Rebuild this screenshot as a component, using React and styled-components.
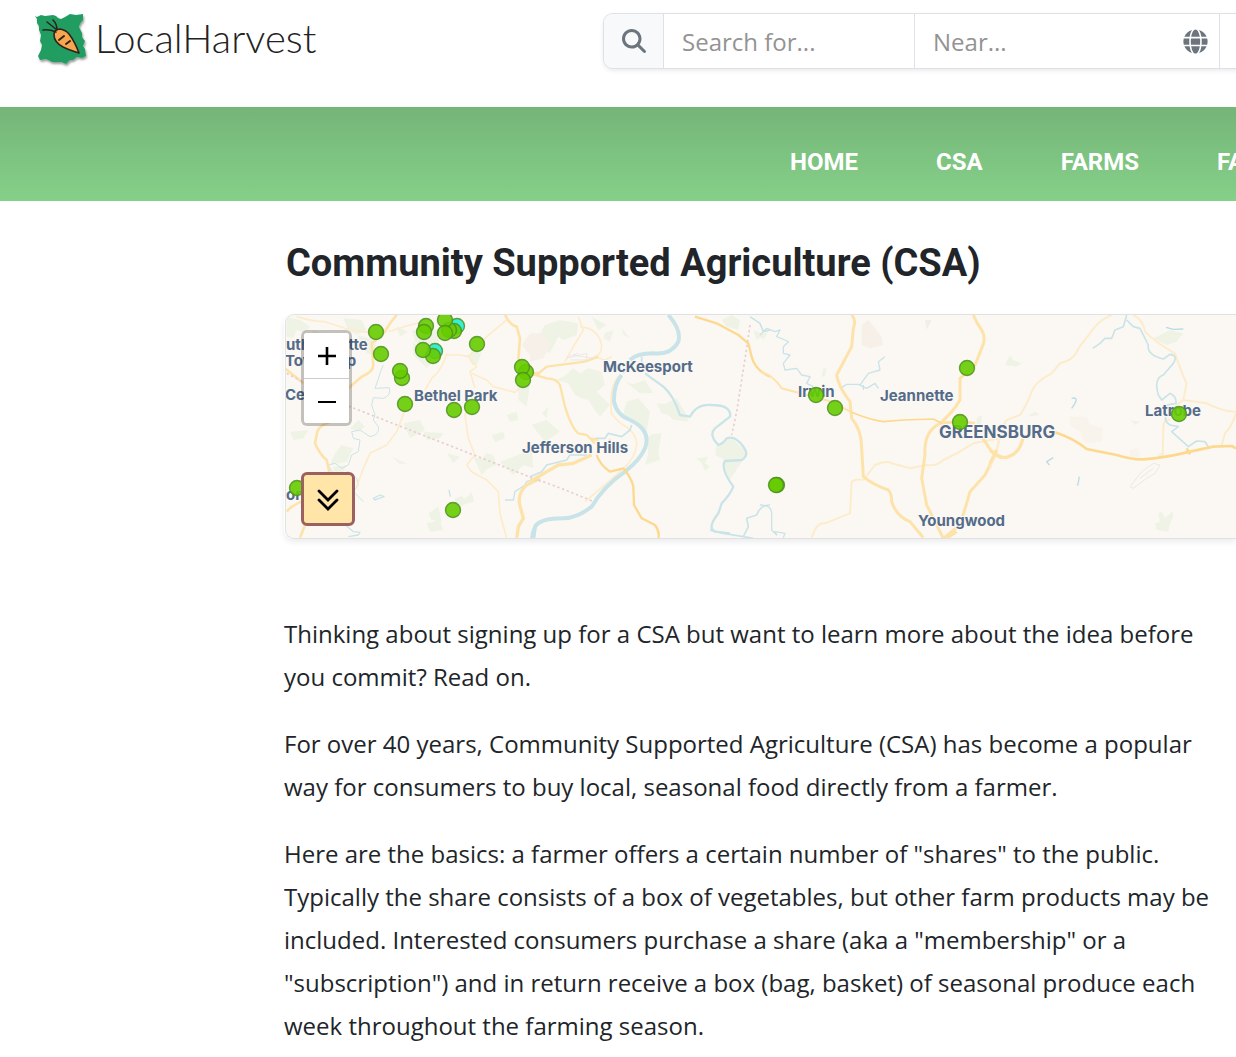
import React, { useState } from "react";
import styled, { createGlobalStyle } from "styled-components";
import { FaGlobe } from "react-icons/fa";
import { FaMagnifyingGlass } from "react-icons/fa6";

const GlobalStyle = createGlobalStyle`
  * {
    box-sizing: border-box;
  }
  body {
    margin: 0;
    overflow-x: hidden;
    background: #fff;
    color: #212529;
    font-family: "Open Sans", "Liberation Sans", sans-serif;
  }
`;

const StyledHeader = styled.header`
  display: flex;
  justify-content: space-between;
  height: 107px;
  padding: 13px 0 0 34px;
  overflow: hidden;
`;
const StyledLogo = styled.a`
  display: flex;
  gap: 4px;
  height: 56px;
  color: #222;
  text-decoration: none;
  font-family: Lato, "Open Sans", sans-serif;
  font-size: 40px;
  font-weight: 300;
  line-height: 50px;
`;
const StyledSearch = styled.form`
  display: flex;
  height: 56px;
  margin-right: -17px;
  border: 1px solid #dee2e6;
  border-radius: 10px;
  background: #fff;
  box-shadow: 0 2px 4px rgba(0, 0, 0, 0.08);
`;
const StyledSearchIcon = styled.button`
  display: flex;
  align-items: center;
  justify-content: center;
  width: 60px;
  padding: 0;
  border: 0;
  border-right: 1px solid #dee2e6;
  border-radius: 9px 0 0 9px;
  background: #f8f9fa;
  color: #6c757d;
  font-size: 24px;
`;
const StyledField = styled.label`
  display: flex;
  align-items: center;
  width: ${(props) => props.$width};
  padding: 0 11px 0 18px;
  border-right: 1px solid #dee2e6;
  color: #6c757d;
  font-size: 25px;
`;
const StyledInput = styled.input`
  flex: 1;
  min-width: 0;
  height: 100%;
  padding: 0;
  border: 0;
  background: transparent;
  font-family: inherit;
  font-size: 24px;
  &::placeholder {
    color: #939393;
    opacity: 1;
  }
  &:focus {
    outline: none;
  }
`;

const StyledNav = styled.nav`
  display: flex;
  gap: 78px;
  height: 94px;
  padding: 16px 0 0 790px;
  overflow: hidden;
  background: linear-gradient(to bottom, #75b578, #85d089);
  font-family: Roboto, "Open Sans", sans-serif;
  font-size: 24px;
  font-weight: 700;
  line-height: 78px;
  white-space: nowrap;
`;
const StyledNavLink = styled.a`
  color: #fff;
  text-decoration: none;
  &:hover {
    text-decoration: underline;
  }
`;

const StyledMain = styled.main`
  padding-left: 284px;
`;
const StyledTitle = styled.h1`
  margin: 0;
  padding: 37px 0 26px 2px;
  font-family: Roboto, "Open Sans", sans-serif;
  font-size: 38px;
  font-weight: 700;
  line-height: 50px;
`;
const StyledMap = styled.section`
  position: relative;
  height: 225px;
  margin-left: 1px;
  border: 1px solid #dee2e6;
  border-right: 0;
  border-radius: 9px 0 0 9px;
  overflow: hidden;
  background: #fbf8f3;
`;
const StyledMapShadow = styled.div`
  border-radius: 9px 0 0 9px;
  box-shadow: 0 3px 6px rgba(0, 0, 0, 0.08);
`;
const StyledMapDrawing = styled.svg`
  display: block;
  width: 100%;
  height: 100%;
`;
const StyledZoom = styled.div`
  position: absolute;
  top: 15px;
  left: 15px;
  display: flex;
  flex-direction: column;
  width: 51px;
  border: 3px solid rgba(0, 0, 0, 0.22);
  border-radius: 6px;
  background: #fff;
  background-clip: padding-box;
`;
const StyledZoomButton = styled.button`
  display: flex;
  align-items: center;
  justify-content: center;
  height: 45px;
  padding: 0 0 0 1px;
  border: 0;
  border-radius: 3px;
  background: #fff;
  & + & {
    border-top: 1px solid #ccc;
    border-radius: 0 0 3px 3px;
  }
`;
const StyledExpand = styled.button`
  position: absolute;
  top: 157px;
  left: 15px;
  display: flex;
  align-items: center;
  justify-content: center;
  width: 54px;
  height: 54px;
  padding: 0;
  border: 3px solid #9b615f;
  border-radius: 6px;
  background: #ffe6a8;
`;

const StyledArticle = styled.article`
  padding: 73px 18px 8px 0;
  font-size: 24px;
  line-height: 43px;
`;
const StyledParagraph = styled.p`
  margin: 0 0 24px;
`;

const NAV = ["HOME", "CSA", "FARMS", "FARMERS MARKETS"];

const PARAGRAPHS = [
  "Thinking about signing up for a CSA but want to learn more about the idea before you commit? Read on.",
  "For over 40 years, Community Supported Agriculture (CSA) has become a popular way for consumers to buy local, seasonal food directly from a farmer.",
  'Here are the basics: a farmer offers a certain number of "shares" to the public. Typically the share consists of a box of vegetables, but other farm products may be included. Interested consumers purchase a share (aka a "membership" or a "subscription") and in return receive a box (bag, basket) of seasonal produce each week throughout the farming season.',
];

const COLORS = {
  water: "#c9e4e8",
  road: "#fde3a9",
  minor: "#fdeccb",
  main: "#fcd98f",
  wood: "#eff3e5",
  border: "#e8cdd1",
};

// Each sheet is drawn at three times the map scale, from its own left edge.
const SHEETS = [
  {
    x: 280,
    shapes: [
      ["wood", "M20 35 60 45 90 65 75 85 50 75 40 100 20 95ZM95 75 130 85 145 100 110 105ZM190 40 245 45 260 75 230 90 205 75ZM230 90 290 105 280 150 260 145ZM350 65 385 80 360 95ZM395 75 470 75 480 130 440 135 405 110ZM400 110 460 170 440 190 400 150Z"],
      ["wood", "M235 345 255 365 235 380 210 370ZM370 355 420 345 435 375 390 400ZM430 380 490 385 480 400 440 405ZM30 380 85 375 70 400 40 405ZM185 420 220 430 200 470 150 480 165 445ZM160 485 200 480 190 500 160 500ZM335 455 380 475 360 478ZM500 445 540 455 520 475ZM525 580 545 572 555 582 575 560 582 590 560 596 530 610ZM445 625 475 605 485 650 455 645ZM440 655 480 645 490 675 450 680ZM715 225 750 240 740 305 715 285ZM580 455 605 462 620 445 640 450 650 480 625 490 605 510ZM635 390 670 380 675 400 645 412ZM660 470 715 450 755 430 760 490 730 480 700 510Z"],
      ["wood", "M575 135 605 145 590 180 565 165ZM680 330 710 320 715 345 690 350Z"],
      ["wood", "M745 90 780 85 780 165 750 150 725 120Z", "#f6f0e8"],
      ["water", "M310 180Q300 200 294 225L285 250 328 248Q335 270 310 280L280 278 275 300 285 330 280 345 295 365Q300 390 270 395L240 375 215 380 220 400 240 405 235 440 215 450 205 480 185 490 165 475 145 480 165 515 205 500 230 520 235 540 220 560 250 590", 3],
      ["water", "M280 580 300 570 312 575 285 585ZM507 555 511 575M190 655 220 680 240 682 235 690 205 695M675 585 700 585 705 560 735 540 740 530 780 515", 4],
      ["water", "M780 650Q758 665 755 700", 10],
      ["minor", "M50 35Q100 50 135 50L195 70 280 85M325 80 390 60 455 45M500 145Q490 190 455 220L435 255M500 150 540 150 565 155 590 130 620 95 680 45M575 165 590 185 570 200 585 250M575 205 620 225 640 245 705 262 735 230M375 315 350 380 320 420 270 445 250 490 230 545M580 290 555 330 565 400 585 450 560 480 575 500 620 525 655 560 660 625 680 700M565 150 580 180", 5],
      ["road", "M350 30Q325 60 315 80L275 115 280 180Q280 200 245 215L205 250M175 345Q120 355 112 380L105 415Q120 450 140 465L150 510M15 190 70 235M20 620Q45 590 90 585M60 698 75 660M675 30Q690 60 710 65L720 100 715 160 740 205 780 205", 8],
      ["road", "M780 520 740 540Q715 560 718 595L730 640 715 665 710 700", 10],
      ["border", "M20 205 210 305 735 510 780 530", 5],
    ],
  },
  {
    x: 530,
    shapes: [
      ["wood", "M45 60 90 45 145 55 140 90 100 105 85 95 60 145 10 120ZM185 35 230 60 205 75ZM225 85 250 75 240 110 220 100ZM275 70 300 100 280 90ZM75 225 100 215 130 190 150 205 175 190 215 200 225 240 200 260 215 275 240 300 210 335 190 310 175 285 160 282 135 270 115 235ZM285 230 310 238 345 225 370 265 330 265ZM290 290 325 280 360 320 350 380 320 350 300 345 280 325ZM380 295 405 297 440 280 470 330 475 350 430 345 415 330 395 325ZM35 325 55 305 50 340ZM5 360 50 345 90 380 45 410ZM350 400 365 388 395 385 385 440 390 465 345 480 355 445ZM500 460 535 455 525 475 540 485 525 498 515 475ZM560 420 600 395 650 440 635 470 600 525 585 500 585 465 555 450ZM575 45 605 30 630 45 625 75 590 65ZM670 75 705 90 680 105Z"],
      ["wood", "M0 85 40 85 60 120 40 160 0 170Z", "#f6f0e8"],
      ["border", "M25 525Q110 555 190 590M660 60 650 130 620 320 605 390", 5],
      ["minor", "M240 400 230 420M105 170 130 125 160 75 145 35M150 65Q205 70 215 120 215 150 195 155L225 165 245 155M245 330Q235 240 270 210M245 325Q260 350 295 370 320 390 320 420 315 460 280 490 220 545 165 590 100 630L40 640M350 200 405 230 450 285 485 350 480 370 450 440 445 510 415 510 395 545 415 575 380 620 370 650 375 680M440 285 470 298 505 290 530 250 590 190 620 105 645 85 645 30M475 30 475 100 490 115 465 130 435 160 310 168 295 175M380 30Q430 70 430 110L425 150M530 40 515 90 490 110", 5],
      ["water", "M305 360 300 375 275 395 235 385 225 400 195 400M170 450 120 450 110 465 50 480 35 500 0 515M300 170 280 205M335 155 335 175M660 35 690 55 700 80 720 75M720 600Q690 600 680 630L650 640 655 665 640 695M540 675 580 685 640 695 670 700", 5],
      ["water", "M345 205 400 245Q430 270 450 330L480 335Q500 295 545 300 605 300 600 335L555 370Q535 390 565 420 580 415 590 400 615 390 640 425 660 450 635 465L585 468Q570 490 610 545 600 570 575 595L565 625Q530 670 555 680L600 685", 7],
      ["water", "M415 30Q455 75 445 110 425 150 370 145 320 145 300 165M275 210Q250 240 252 290 260 330 300 345 365 375 345 430 330 465 285 500 220 545 185 605 140 640 100 640 30 640 15 665L10 700", 12],
      ["road", "M20 210 50 185 165 170 205 155M0 205 50 220Q80 220 90 240L105 305Q125 370 145 385L170 390 195 415M180 400 205 405", 7],
      ["road", "M0 530Q50 500 85 480L130 475 185 450", 10],
      ["main", "M200 450Q210 480 240 500L280 490Q305 520 310 545L312 600 335 640 375 660Q390 680 385 700M495 35 560 55 625 90 655 115 665 155Q675 195 720 215", 7],
      ["border", "M110 160 170 145 170 165 120 165M130 150 190 160M115 155 145 145", 2, "#e3e1e1"],
    ],
  },
  {
    x: 760,
    shapes: [
      ["wood", "M185 215 190 190 200 190 195 215ZM650 340 665 330 665 355 650 360ZM0 90 25 80 10 105Z"],
      ["wood", "M305 60 325 45 365 95 370 120 330 130 305 120Z", "#f6f0e8"],
      ["wood", "M495 45 515 45 500 75Z", "#efeeec"],
      ["water", "M0 90 20 70 45 80 60 75 50 95 75 105 85 110 70 125 70 145 90 150 70 175 75 195 110 190 125 210 150 215 140 235 160 245M240 250 260 238 295 238 320 250 345 235 355 250M300 240 325 205 360 195 355 170 375 155M310 240 310 255M0 600Q35 600 35 625L35 675 50 690 45 680 75 685 70 698", 4],
      ["minor", "M155 698Q170 650 195 655L270 625 275 530Q290 520 310 525M310 525 345 480Q380 465 395 475L450 490 500 480Q530 485 550 465L590 445 640 415 720 400M720 395 705 450", 6],
      ["road", "M0 200Q40 210 65 250L140 270 215 290 275 322", 6],
      ["road", "M640 30Q650 55 665 75 680 100 665 130L645 180 600 220 600 285Q580 320 540 355 490 380 495 450L485 520 500 600 525 650 550 700", 9],
      ["road", "M275 30Q290 45 280 70L275 125 230 210Q235 245 270 290L275 340Q305 375 305 430L310 515Q340 540 385 555 395 565 395 590 410 635 450 650L490 698M550 700 600 660 620 595 630 560 675 510 705 450M560 700 590 680", 9],
      ["road", "M665 395 695 440 725 460M540 355 600 350 645 355", 9],
      ["main", "M275 322Q330 345 370 350L430 345 520 342 545 355", 5],
    ],
  },
  {
    x: 990,
    shapes: [
      ["wood", "M490 100 540 75 580 85 560 110 530 120ZM45 180 60 150 70 165 95 175 80 185ZM110 335 135 320 150 330ZM420 345 450 350 435 360ZM495 655 510 650 505 625 515 620 525 638 550 618 548 640 540 655 535 680 500 675ZM500 450 520 440 515 455Z"],
      ["wood", "M240 335 290 335 300 360 340 370 335 410 285 415 270 380 240 360ZM420 435 445 430 450 455 420 455Z", "#f8f3eb"],
      ["minor", "M0 490Q20 440 30 400L35 370 50 345 90 330Q110 300 125 260 135 230 185 205L210 175Q255 165 265 130L300 85Q325 45 365 30", 6],
      ["minor", "M430 30Q460 45 465 80 500 115 555 145 575 205 590 235L580 285M540 345Q520 340 520 370L518 455M560 300 580 285 650 295Q700 320 738 320M738 325Q725 365 705 385L695 420", 6],
      ["water", "M410 30 400 65 375 75 365 100 345 100 330 115 308 130M410 45 430 65 450 70 475 120Q470 150 520 162L540 148Q565 150 550 175L520 210Q490 220 505 270L515 285 540 265Q560 275 558 295L530 300 545 320Q510 340 540 360L565 365 545 380 595 425 620 408 645 410 655 425", 5],
      ["water", "M528 67 550 73 580 72M245 280Q265 275 255 295L245 310M190 458 170 470 178 480M268 515 263 542", 4, "#b8dce4"],
      ["border", "M420 545 455 500 490 475 510 480 495 505 470 520 430 550ZM450 520 490 490", 3, "#eae7e6"],
      ["road", "M0 435Q35 465 55 455 90 445 100 395M0 475 20 435", 10],
      ["main", "M195 382Q250 400 290 432L380 450Q430 465 460 463 520 460 600 440L670 425 725 423 738 430M590 430 600 448", 8],
    ],
  },
];

const LABELS = [
  { x: 286, y: 350, text: "uth Fayette" },
  { x: 285, y: 366, text: "Township" },
  { x: 285, y: 400, text: "Cecil" },
  { x: 286, y: 500, text: "ons" },
  { x: 414, y: 401, text: "Bethel Park" },
  { x: 603, y: 372, text: "McKeesport" },
  { x: 522, y: 453, text: "Jefferson Hills" },
  { x: 798, y: 397, text: "Irwin" },
  { x: 880, y: 401, text: "Jeannette" },
  { x: 939, y: 438, text: "GREENSBURG", size: 17 },
  { x: 1145, y: 416, text: "Latrobe" },
  { x: 918, y: 526, text: "Youngwood" },
];

const PINS = [
  [376, 332], [381, 354], [402, 378], [400, 371], [405, 404],
  [426, 326], [424, 332], [457, 326, "#1ef0d0"], [454, 331], [449, 330], [445, 320], [445, 333],
  [435, 351, "#1ef0d0"], [433, 356], [423, 350], [477, 344],
  [526, 372], [522, 367], [523, 380], [454, 410], [472, 407],
  [297, 488], [453, 510], [777, 485], [776, 485], [816, 395], [835, 408],
  [967, 368], [960, 422], [1179, 414],
];

const Carrot = () => (
  <svg width="57" height="56" viewBox="0 0 57 56" aria-hidden="true">
    <defs>
      <filter id="paper-shadow" x="-10%" y="-10%" width="125%" height="125%">
        <feDropShadow dx="1" dy="2" stdDeviation="1" floodColor="#000" floodOpacity="0.4" />
      </filter>
    </defs>
    <path
      d="M1 3 3 4 7 2 11 3 19 2 22 3 24 5 27 6 31 4 36 1 42 2 49 1 49 7 46 11 45 14 48 20 48 24 51 28 49 33 51 36 52 43 48 45 43 44 39 47 36 47 34 49 32 51 27 49 22 49 18 49 12 46 6 47 4 43 7 37 8 32 6 28 7 22 5 17 5 13 3 10 3 6Z"
      fill="#249d62"
      filter="url(#paper-shadow)"
    />
    <path
      d="M20 22Q20 16 26 16 32 17 35 21 41 29 45 40 35 37 29 34 20 29 20 22Z"
      fill="#f8a550"
      stroke="#29251c"
      strokeWidth="1.6"
      strokeLinejoin="round"
    />
    <path
      d="M22 19Q15 16 9 17M23 17Q18 13 13 9M23 17Q23 11 19 7"
      fill="none"
      stroke="#29251c"
      strokeWidth="1.6"
      strokeLinecap="round"
    />
    <path
      d="M25 27 30 23M32 31 36 28"
      stroke="#29251c"
      strokeWidth="2"
      strokeLinecap="round"
    />
  </svg>
);

const MapDrawing = () => (
  <StyledMapDrawing
    viewBox="286 315 950 223"
    preserveAspectRatio="xMinYMin slice"
    role="img"
    aria-label="Map of CSA farms">
    {SHEETS.map((sheet) => (
      <g
        key={sheet.x}
        transform={`translate(${sheet.x} 305) scale(0.33333)`}
        strokeLinejoin="round"
        fill="none">
        {sheet.shapes.map(([kind, d, size, color], index) =>
          kind === "wood" ? (
            <path key={index} d={d} fill={size || COLORS.wood} />
          ) : (
            <path
              key={index}
              d={d}
              stroke={color || COLORS[kind]}
              strokeWidth={size}
              strokeDasharray={kind === "border" && !color ? "7 8" : undefined}
            />
          )
        )}
      </g>
    ))}
    {LABELS.map((label) => (
      <text
        key={label.text}
        x={label.x}
        y={label.y}
        fill="#546b8a"
        stroke="#fbf8f3"
        strokeWidth="2"
        paintOrder="stroke"
        fontFamily="Inter, sans-serif"
        fontSize={label.size || 15}
        fontWeight="700">
        {label.text}
      </text>
    ))}
    {PINS.map(([x, y, color], index) => (
      <circle
        key={index}
        cx={x}
        cy={y}
        r="7.5"
        fill={color || "#66cc00"}
        fillOpacity="0.9"
        stroke="#4f8f22"
        strokeOpacity="0.85"
        strokeWidth="1.4"
      />
    ))}
  </StyledMapDrawing>
);

const App = () => {
  const [search, setSearch] = useState("");
  const [near, setNear] = useState("");
  return (
    <>
      <GlobalStyle />
      <StyledHeader>
        <StyledLogo href="#home">
          <Carrot />
          LocalHarvest
        </StyledLogo>
        <StyledSearch onSubmit={(event) => event.preventDefault()}>
          <StyledSearchIcon type="submit" aria-label="Search">
            <FaMagnifyingGlass />
          </StyledSearchIcon>
          <StyledField $width="251px">
            <StyledInput
              type="text"
              aria-label="Search for"
              placeholder="Search for..."
              value={search}
              onChange={(event) => setSearch(event.target.value)}
            />
          </StyledField>
          <StyledField $width="305px">
            <StyledInput
              type="text"
              aria-label="Near"
              placeholder="Near..."
              value={near}
              onChange={(event) => setNear(event.target.value)}
            />
            <FaGlobe />
          </StyledField>
          <StyledField $width="32px" as="div" />
        </StyledSearch>
      </StyledHeader>
      <StyledNav>
        {NAV.map((item) => (
          <StyledNavLink key={item} href={`#${item.toLowerCase()}`}>
            {item}
          </StyledNavLink>
        ))}
      </StyledNav>
      <StyledMain>
        <StyledTitle>Community Supported Agriculture (CSA)</StyledTitle>
        <StyledMapShadow>
          <StyledMap>
            <MapDrawing />
            <StyledZoom>
              <StyledZoomButton type="button" aria-label="Zoom in">
                <svg width="20" height="20" viewBox="0 0 20 20">
                  <path d="M1 10H19M10 1V19" stroke="#000" strokeWidth="2.6" />
                </svg>
              </StyledZoomButton>
              <StyledZoomButton type="button" aria-label="Zoom out">
                <svg width="20" height="20" viewBox="0 0 20 20">
                  <path d="M1 11H19" stroke="#000" strokeWidth="2" />
                </svg>
              </StyledZoomButton>
            </StyledZoom>
            <StyledExpand type="button" aria-label="Expand map">
              <svg width="24" height="24" viewBox="0 0 24 24">
                <path
                  d="M3 4 12 13 21 4M3 13 12 22 21 13"
                  fill="none"
                  stroke="#000"
                  strokeWidth="2.8"
                  strokeLinecap="round"
                />
              </svg>
            </StyledExpand>
          </StyledMap>
        </StyledMapShadow>
        <StyledArticle>
          {PARAGRAPHS.map((text) => (
            <StyledParagraph key={text}>{text}</StyledParagraph>
          ))}
        </StyledArticle>
      </StyledMain>
    </>
  );
};

export default App;
